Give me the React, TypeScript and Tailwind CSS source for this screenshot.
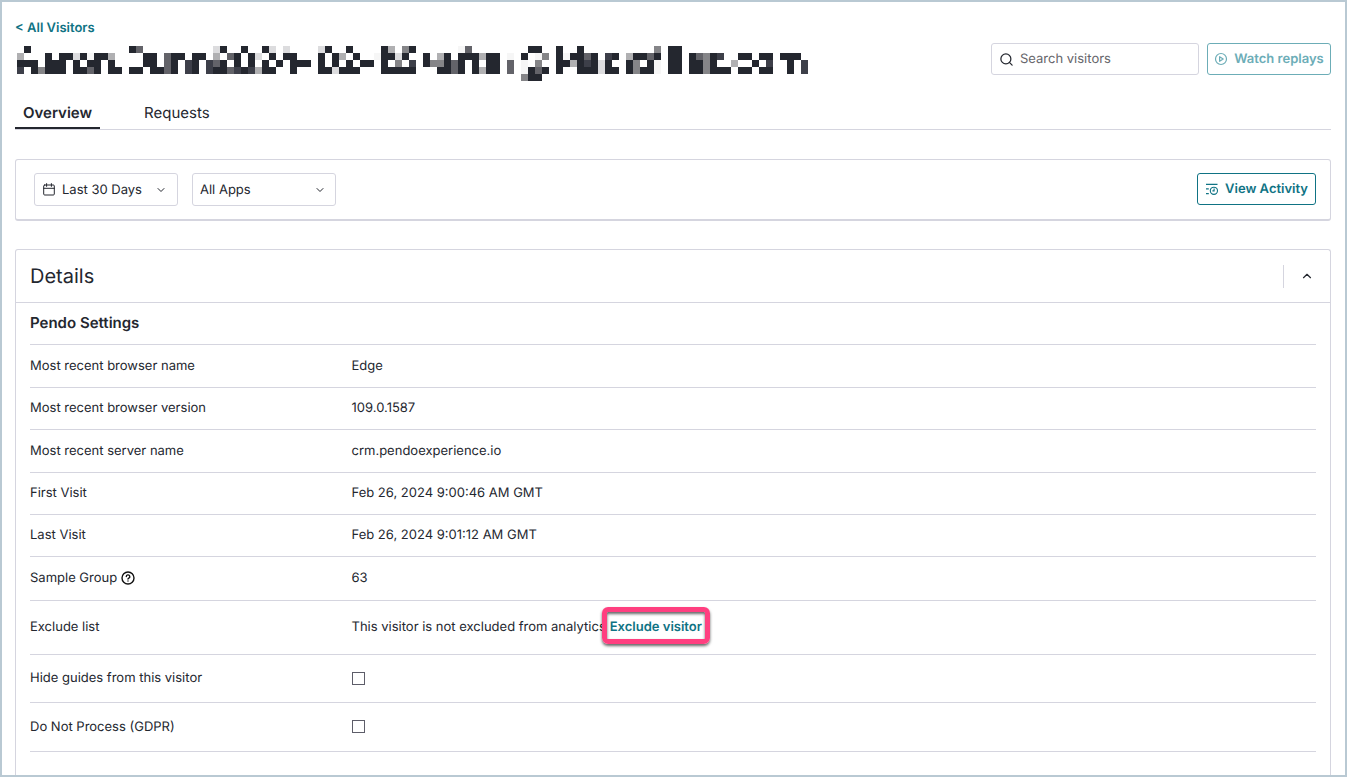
import { useState } from 'react';
import type { ReactNode } from 'react';
import { ChevronDown, ChevronUp, Search } from 'lucide-react';

// Redacted visitor id, drawn as a mosaic. Each row lists [first column, shades].
const mosaic: [number, string][][] = [
  [[1, '#'], [16, '#m'], [28, 'w#'], [32, '#'], [35, '#w'], [38, 'w'], [43, 'w#'], [47, '#'], [52, '#l'], [55, 'g#'], [63, 'xm'], [73, '##'], [77, '#'], [80, '#'], [91, 'g'], [93, '##']],
  [[0, 'l'], [4, '#'], [6, '##w#x##l'], [18, '##'], [21, 'm##'], [25, '##'], [28, 'l'], [30, 'm#'], [33, '#w'], [36, '#'], [38, '##'], [43, '#'], [45, '#l'], [48, '#'], [51, 'x##w#'], [58, '#'], [60, 'l#'], [63, '###l##'], [70, 'x'], [72, '#'], [74, 'xg'], [77, '#x##m#'], [84, 'd#'], [87, 'l##m#'], [93, '##'], [96, '#mg#d'], [103, '##'], [106, '##'], [109, '###']],
  [[0, '###'], [4, '###'], [8, '#'], [10, '##'], [13, '#'], [18, '##'], [21, 'm#'], [24, 'd#'], [27, 'dm#'], [31, '#'], [33, '#'], [35, '#'], [37, '#'], [39, '###'], [43, '#'], [45, '#'], [47, '#'], [49, '##'], [52, '#'], [54, 'g'], [56, 'd'], [58, '#gg#m#'], [65, '#'], [67, '##'], [70, 'm'], [72, 'x'], [74, 'g'], [77, '##l#d#w#'], [87, '#g'], [90, '#x'], [93, '##'], [96, '##g#'], [102, 'l'], [105, '#'], [107, 'd'], [110, '#'], [112, 'd']],
  [[0, 'd'], [2, '#g###'], [8, '##m#'], [13, '##'], [16, '##'], [19, '##m#'], [24, 'd#'], [27, 'd##md#dl##'], [39, '#'], [43, '##w###'], [52, '#####'], [60, '##m#'], [65, '#l##'], [70, 'm'], [72, 'x#m#'], [77, '#'], [80, '###w##'], [87, '#g##x'], [93, '##'], [96, '##g###'], [103, '##'], [106, '##'], [110, '#'], [112, 'd']],
  [[72, 'g##']],
];

const shades: Record<string, string> = {
  '#': '#24272f',
  d: '#3d3f49',
  m: '#636369',
  g: '#858588',
  l: '#b0b0b2',
  w: '#dcdcde',
  x: '#f6f6f6',
};

function RedactedName() {
  return (
    <svg width="791" height="35" viewBox="0 0 113 5" shapeRendering="crispEdges" role="img" aria-label="Visitor">
      {mosaic.map((row, y) =>
        row.map(([start, cells]) =>
          cells.split('').map((c, i) => (
            <rect key={`${start + i}-${y}`} x={start + i} y={y} width="1" height="1" fill={shades[c]} />
          ))
        )
      )}
    </svg>
  );
}

function PlayIcon() {
  return (
    <svg width="14" height="14" viewBox="0 0 14 14" fill="none" stroke="currentColor" strokeWidth="1.2">
      <circle cx="7" cy="7" r="5.5" />
      <path d="M5.6 4.7v4.6L9.2 7z" strokeLinejoin="round" />
    </svg>
  );
}

function CalendarIcon() {
  return (
    <svg width="12" height="13" viewBox="0 0 12 13" fill="none" stroke="currentColor" strokeLinecap="round">
      <rect x="0.7" y="2" width="10.6" height="10" rx="1" />
      <path d="M0.7 5.3h10.6M3.6 0.6v2.8M8.4 0.6v2.8" />
    </svg>
  );
}

function ActivityIcon() {
  return (
    <svg width="14" height="14" viewBox="0 0 14 14" fill="none" stroke="currentColor" strokeWidth="1.1">
      <path d="M1 2.4h11.5M1 6.9h2.8M1 11.6h2.8" />
      <circle cx="8.9" cy="8.8" r="3.6" />
      <path d="M9.1 6.6v2.3H7.4" />
    </svg>
  );
}

function HelpIcon() {
  return (
    <svg width="14" height="14" viewBox="0 0 14 14" fill="none" stroke="#111" strokeWidth="1.4" strokeLinecap="round">
      <circle cx="7" cy="7" r="6" />
      <path d="M5.3 5.6a1.75 1.75 0 1 1 2.5 1.6c-.6.3-.8.5-.8.9M7 10v.1" />
    </svg>
  );
}

function Row({ label, height, children }: { label: ReactNode; height: string; children: ReactNode }) {
  return (
    <tr className={`${height} border-b border-[#d5d5df]`}>
      <th scope="row" className="w-1/4 p-0 text-left font-normal">
        {label}
      </th>
      <td className="p-0">{children}</td>
    </tr>
  );
}

const checkboxStyle =
  'block size-[13px] appearance-none border border-[#5d5d69] bg-white checked:bg-[#0f7384]';

export default function App() {
  const [tab, setTab] = useState('Overview');
  const [open, setOpen] = useState(true);
  const [hideGuides, setHideGuides] = useState(false);
  const [doNotProcess, setDoNotProcess] = useState(false);

  return (
    <div className="flex min-h-screen flex-col border-2 border-[#b9c9d3] bg-white pl-[13px] pr-3.5 pt-4 font-['Inter',sans-serif] text-[13px] leading-5 text-[#24272f] **:[text-rendering:geometricPrecision]">
      {/* Header */}
      <a href="#" className="self-start font-semibold text-[#0f7384]">
        &lt; All Visitors
      </a>
      <header className="mt-[3px] flex items-start justify-between">
        <h1 className="pl-0.5 pt-[5px]">
          <RedactedName />
        </h1>
        <div className="flex gap-2 pt-0.5">
          <div className="relative flex items-center">
            <Search className="absolute left-2 size-[15px]" strokeWidth={2} />
            <input
              type="text"
              aria-label="Search visitors"
              placeholder="Search visitors"
              className="h-8 w-52 rounded-[3px] border border-[#d5d5df] pl-7 pr-2 placeholder:text-[#66666b]"
            />
          </div>
          <button
            type="button"
            disabled
            className="flex h-8 w-31 items-center justify-center gap-1.5 rounded-[3px] border border-[#6cadb7] font-semibold text-[#6cadb7]"
          >
            <PlayIcon />
            Watch replays
          </button>
        </div>
      </header>

      {/* Tabs */}
      <nav className="mt-4 flex gap-9 border-b border-[#d5d5df] text-[15px]">
        {['Overview', 'Requests'].map((name) => (
          <button
            key={name}
            type="button"
            onClick={() => setTab(name)}
            className={
              tab === name
                ? 'h-8 border-b-2 border-[#24272f] px-2 pt-0.5 font-semibold'
                : 'h-8 border-b-2 border-transparent px-2 pt-0.5'
            }
          >
            {name}
          </button>
        ))}
      </nav>

      {/* Filters */}
      <div className="mt-[29px] flex items-start gap-3.5 rounded-[3px] border border-b-2 border-[#d5d5df] py-[13px] pl-[18px] pr-3.5">
        <button
          type="button"
          className="flex h-[33px] w-36 items-center rounded-[3px] border border-[#d5d5df] pl-2 pr-2.5"
        >
          <CalendarIcon />
          <span className="ml-[7px] mr-auto">Last 30 Days</span>
          <ChevronDown className="size-3" />
        </button>
        <div className="relative flex items-center">
          <select
            aria-label="Apps"
            className="h-[33px] w-36 appearance-none rounded-[3px] border border-[#d5d5df] bg-white px-[7px]"
          >
            <option>All Apps</option>
          </select>
          <ChevronDown className="pointer-events-none absolute right-2.5 size-3" />
        </div>
        <button
          type="button"
          className="ml-auto flex h-8 items-center gap-1.5 rounded-[3px] border border-[#0f7384] px-[7px] font-semibold text-[#0f7384]"
        >
          <ActivityIcon />
          View Activity
        </button>
      </div>

      {/* Details */}
      <section className="mt-7 flex-1 rounded-t-[3px] border border-b-0 border-[#d5d5df]">
        <div className="flex h-[53px] items-center justify-between border-b border-[#d5d5df] pl-3.5 pr-4">
          <h2 className="text-xl">Details</h2>
          <button
            type="button"
            aria-label="Toggle details"
            onClick={() => setOpen(!open)}
            className="flex h-[23px] items-center border-l border-[#d5d5df] pl-4"
          >
            <ChevronUp className="size-3.5" />
          </button>
        </div>
        {open && (
          <div className="px-3.5">
            <h3 className="flex h-[42px] items-center border-b border-[#d5d5df] pb-0.5 text-[15px] font-semibold">
              Pendo Settings
            </h3>
            <table className="w-full border-collapse">
              <tbody>
                <Row label="Most recent browser name" height="h-[42px]">Edge</Row>
                <Row label="Most recent browser version" height="h-[42px]">109.0.1587</Row>
                <Row label="Most recent server name" height="h-[43px]">crm.pendoexperience.io</Row>
                <Row label="First Visit" height="h-[42px]">Feb 26, 2024 9:00:46 AM GMT</Row>
                <Row label="Last Visit" height="h-[42px]">Feb 26, 2024 9:01:12 AM GMT</Row>
                <Row
                  label={
                    <span className="flex items-center gap-1">
                      Sample Group
                      <HelpIcon />
                    </span>
                  }
                  height="h-11"
                >
                  63
                </Row>
                <Row label="Exclude list" height="h-[54px]">
                  <div className="flex items-center">
                    This visitor is not excluded from analytics
                    <button
                      type="button"
                      className="-ml-1 mb-1 h-[37px] rounded-md border-5 border-[#ff3f80] px-[3px] pt-1 font-semibold text-[#0f7384] shadow-[0_2px_3px_rgba(0,0,0,0.6),inset_0_2px_3px_rgba(0,0,0,0.6)]"
                    >
                      Exclude visitor
                    </button>
                  </div>
                </Row>
                <Row label={<label htmlFor="hide-guides">Hide guides from this visitor</label>} height="h-12">
                  <input
                    id="hide-guides"
                    type="checkbox"
                    checked={hideGuides}
                    onChange={(e) => setHideGuides(e.target.checked)}
                    className={checkboxStyle}
                  />
                </Row>
                <Row label={<label htmlFor="gdpr">Do Not Process (GDPR)</label>} height="h-[49px]">
                  <input
                    id="gdpr"
                    type="checkbox"
                    checked={doNotProcess}
                    onChange={(e) => setDoNotProcess(e.target.checked)}
                    className={checkboxStyle}
                  />
                </Row>
              </tbody>
            </table>
          </div>
        )}
      </section>
    </div>
  );
}
